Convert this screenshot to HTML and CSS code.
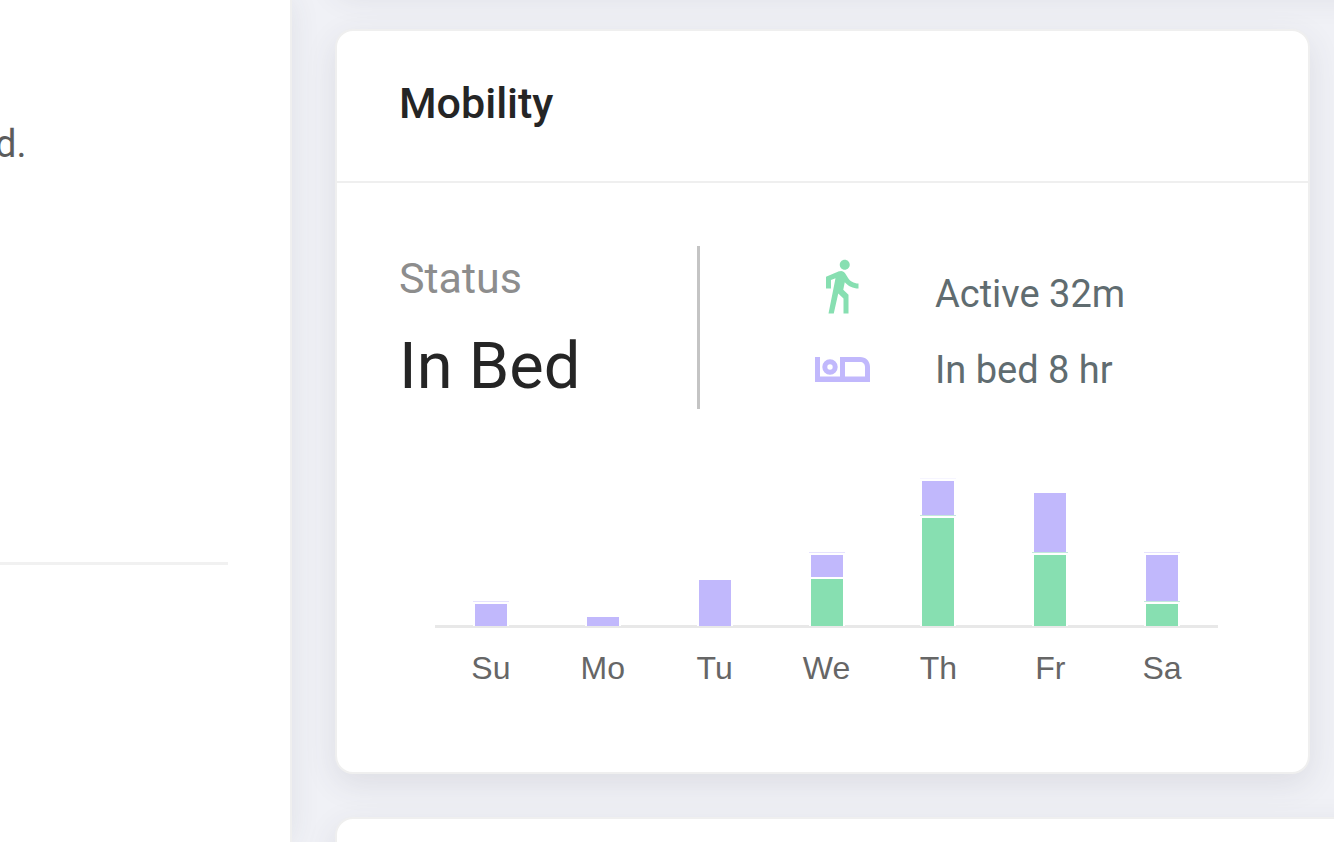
FILE: index.html
```
<!DOCTYPE html>
<html lang="en">
<head>
    <meta charset="UTF-8">
    <title>Mobility</title>
    <link rel="stylesheet" href="styles.css">
</head>
<body>
<div class="page">
    <aside class="side">
        <p class="side-text">d.</p>
        <hr class="side-line">
    </aside>
    <main class="main">
        <section class="card card-prev"></section>
        <section class="card card-mobility">
            <h2 class="card-title">Mobility</h2>
            <div class="card-body">
                <div class="summary">
                    <div class="status">
                        <p class="status-label">Status</p>
                        <p class="status-value">In Bed</p>
                    </div>
                    <ul class="totals">
                        <li>
                            <svg class="icon icon-walk" viewBox="0 0 24 24"><path d="M13.5 5.5c1.1 0 2-.9 2-2s-.9-2-2-2-2 .9-2 2 .9 2 2 2zM9.8 8.9L7 23h2.1l1.8-8 2.1 2v6h2v-7.5l-2.1-2 .6-3C14.8 12 16.8 13 19 13v-2c-1.9 0-3.5-1-4.3-2.4l-1-1.6c-.4-.6-1-1-1.7-1-.3 0-.5.1-.8.1L6 8.3V13h2V9.6l1.8-.7z"/></svg>
                            <span>Active 32m</span>
                        </li>
                        <li>
                            <svg class="icon icon-bed" viewBox="0 0 60 60"><path fill-rule="evenodd" d="M4 17h5v19.5h20V17h20c6 0 10 4 10 10v15H4zM34 22v14.500h20V27c0-3-2-5-5-5z"/><circle cx="19" cy="27" r="5.200" fill="none" stroke="#c1b8fc" stroke-width="5"/></svg>
                            <span>In bed 8 hr</span>
                        </li>
                    </ul>
                </div>
                <div class="chart">
                    <div class="day">
                        <div class="bar">
                            <div class="seg bed line" style="height:24px"></div>
                        </div>
                        <span>Su</span>
                    </div>
                    <div class="day">
                        <div class="bar">
                            <div class="seg bed" style="height:11px"></div>
                        </div>
                        <span>Mo</span>
                    </div>
                    <div class="day">
                        <div class="bar">
                            <div class="seg bed" style="height:48px"></div>
                        </div>
                        <span>Tu</span>
                    </div>
                    <div class="day">
                        <div class="bar">
                            <div class="seg bed line" style="height:24px"></div>
                            <div class="seg active" style="height:49px"></div>
                        </div>
                        <span>We</span>
                    </div>
                    <div class="day">
                        <div class="bar">
                            <div class="seg bed faint" style="height:37px"></div>
                            <div class="seg active line" style="height:110px"></div>
                        </div>
                        <span>Th</span>
                    </div>
                    <div class="day">
                        <div class="bar">
                            <div class="seg bed" style="height:62px"></div>
                            <div class="seg active line" style="height:73px"></div>
                        </div>
                        <span>Fr</span>
                    </div>
                    <div class="day">
                        <div class="bar">
                            <div class="seg bed line" style="height:49px"></div>
                            <div class="seg active line" style="height:24px"></div>
                        </div>
                        <span>Sa</span>
                    </div>
                </div>
            </div>
        </section>
        <section class="card card-next"></section>
    </main>
</div>
</body>
</html>
```
FILE: styles.css
```
*{
    margin: 0;
    padding: 0;
    box-sizing: border-box;
}
body{
    font-family: Roboto, sans-serif;
    color: #252525;
    background: #f0f1f6;
}
.page{
    display: flex;
    height: 100vh;
    overflow: hidden;
}
.side{
    flex: none;
    width: 292px;
    padding-top: 120px;
    background: #fff;
    border-right: 2px solid #efefef;
    box-shadow: 0 0 28px rgba(60,64,80,.09);
}
.side-text{
    height: 442px;
    margin-left: -5px;
    font-size: 38px;
    line-height: 48px;
    color: #5c5c5c;
}
.side-line{
    margin-right: 62px;
    border: 0;
    border-top: 3px solid #f1f1f1;
}
.main{
    flex: 1;
    min-width: 0;
    padding-left: 43px;
}
.card{
    background: #fff;
    border: 2px solid #efefef;
    border-radius: 18px;
    box-shadow: 0 10px 32px rgba(60,64,80,.11);
}
/* only the bottom edge's shadow of this one is on screen */
.card-prev{
    height: 60px;
    margin: -74px -40px 43px 0;
}
.card-mobility{
    margin: 0 24px 43px 0;
}
.card-next{
    height: 200px;
    margin-right: -40px;
}
.card-title{
    height: 152px;
    padding: 44px 62px 0;
    font-size: 43px;
    font-weight: 500;
    line-height: 56px;
    border-bottom: 2px solid #efefef;
}
.card-body{
    padding: 63px 62px 86px;
}
.summary{
    display: flex;
    height: 163px;
}
.status{
    width: 301px;
    border-right: 3px solid #c4c4c4;
}
.status-label{
    padding-top: 4px;
    font-size: 43px;
    line-height: 56px;
    color: #8d8d8d;
}
.status-value{
    padding-top: 18px;
    font-size: 65px;
    line-height: 84px;
}
.totals{
    padding: 10px 0 0 111px;
    list-style: none;
}
.totals li{
    display: flex;
    align-items: center;
    height: 76px;
    font-size: 38px;
    color: #606c70;
}
.icon{
    flex: none;
    width: 60px;
    height: 60px;
    margin-right: 64px;
}
.icon-walk{
    fill: #87dfb1;
    margin-bottom: 16px;
}
.icon-bed{
    fill: #c1b8fc;
}
.chart{
    display: flex;
    margin: 66px 28px 0 36px;
}
.day{
    flex: 1;
    display: flex;
    flex-direction: column;
    align-items: center;
    font: 32px/36px "Liberation Sans", sans-serif;
    color: #666;
}
.bar{
    display: flex;
    flex-direction: column;
    align-items: center;
    justify-content: flex-end;
    width: 100%;
    height: 153px;
    margin-bottom: 22px;
    border-bottom: 3px solid #e8e8e8;
}
.seg{
    flex: none;
    width: 36px;
    border: 2px solid #fff;
    border-bottom: 0;
}
/* the lowest part covers the first pixel of the axis */
.seg:last-child{
    margin-bottom: -1px;
}
.bed{
    background: #c1b8fc;
}
.active{
    background: #87dfb1;
}
.bed.line{
    box-shadow: 0 -1px #e6e2fe;
}
.bed.faint{
    box-shadow: 0 -1px #f6f5ff;
}
.active.line{
    box-shadow: 0 -1px #c3e8dc;
}
```
